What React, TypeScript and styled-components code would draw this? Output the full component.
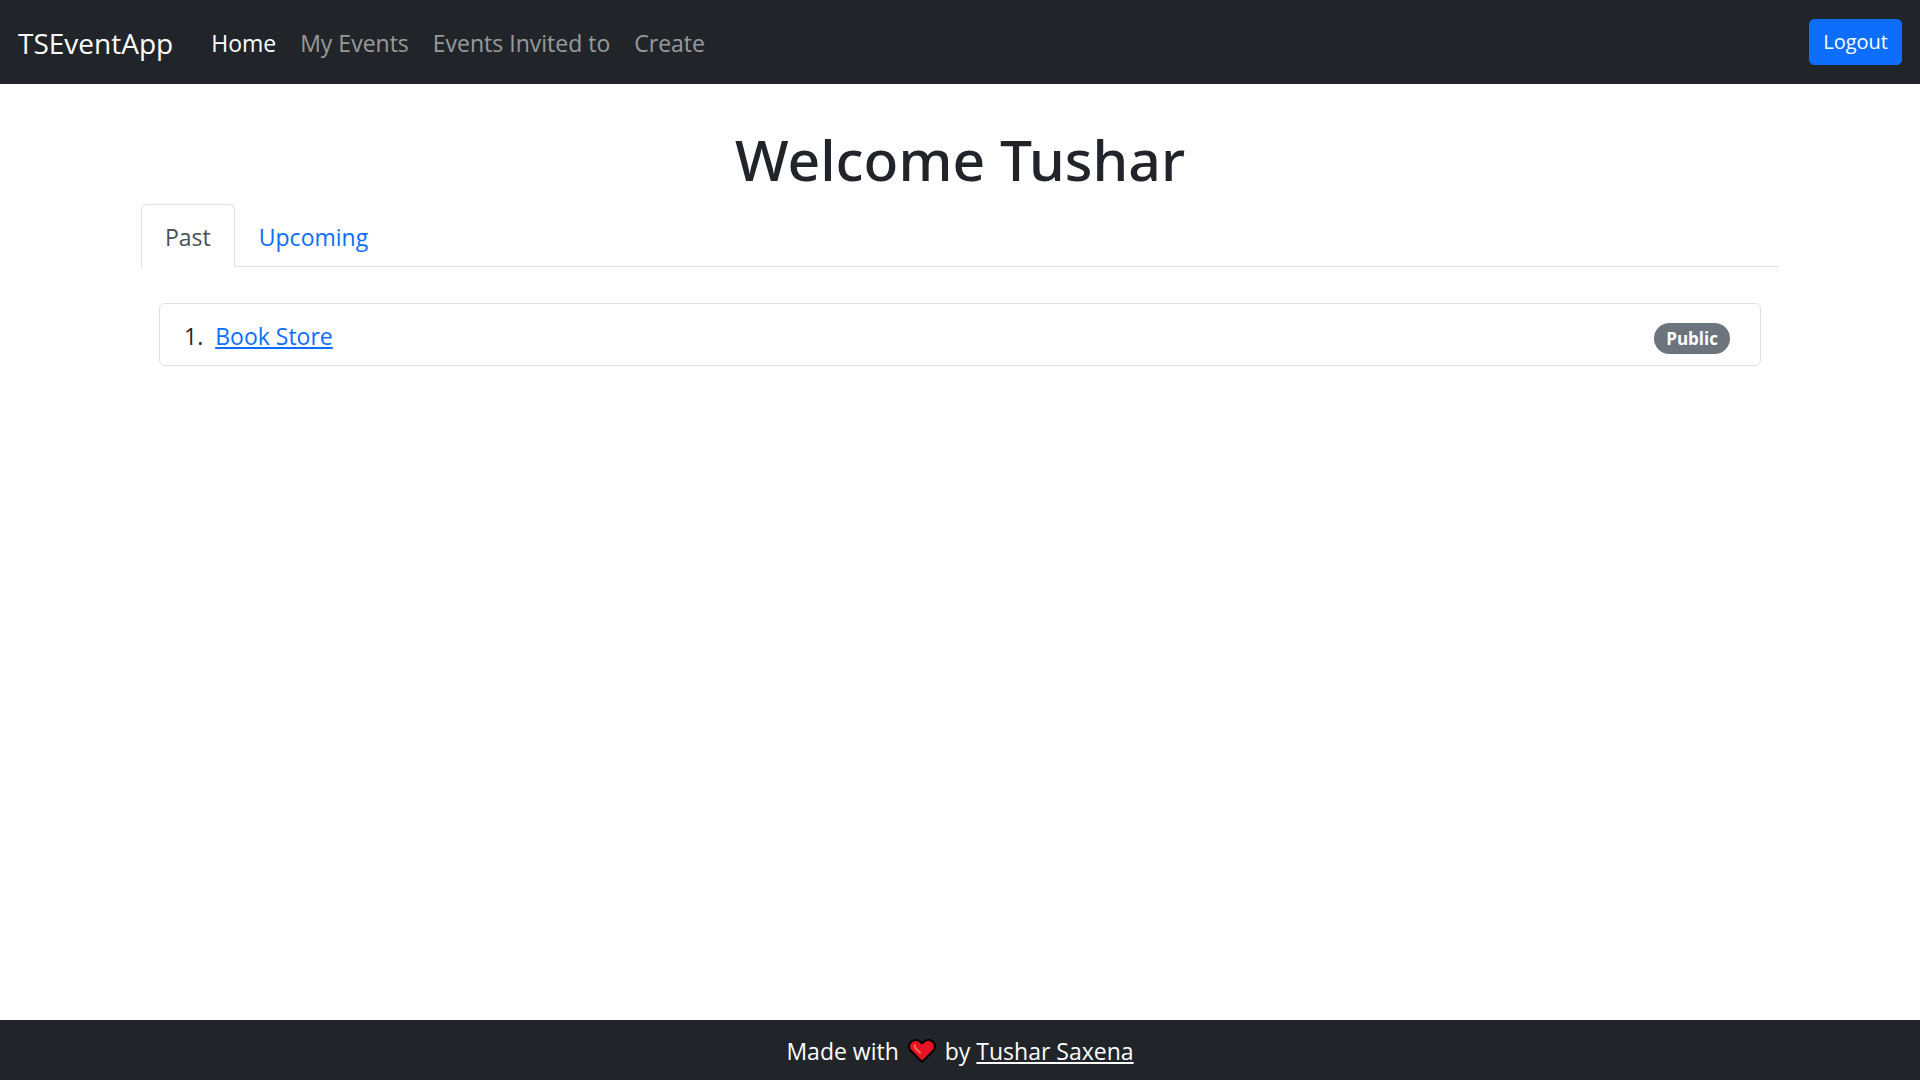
import React, { useState } from "react";
import styled, { createGlobalStyle } from "styled-components";

const GlobalStyle = createGlobalStyle`
  *, *::before, *::after { box-sizing: border-box; }
  body {
    margin: 0;
    background: #fff;
    color: #212529;
    font-family: "Open Sans", "Noto Sans", sans-serif;
    font-size: 23px;
    line-height: 36px;
  }
`;

const Page = styled.div`
  display: flex;
  flex-direction: column;
  min-height: 100vh;
`;

const Navbar = styled.header`
  display: flex;
  align-items: center;
  min-height: 84px;
  padding: 0 18px;
  background: #212529;
`;

const Brand = styled.a`
  margin-right: 26px;
  padding-top: 2px;
  color: #fff;
  font-size: 28px;
  text-decoration: none;
`;

const NavLinks = styled.nav`
  display: flex;
  flex: 1;
`;

const NavLink = styled.a<{ $active?: boolean }>`
  padding: 2px 12px 0;
  color: ${(p) => (p.$active ? "#fff" : "rgba(255, 255, 255, 0.55)")};
  text-decoration: none;
`;

const LogoutButton = styled.button`
  padding: 6px 13px;
  border: 1px solid #0d6efd;
  border-radius: 5px;
  background: #0d6efd;
  color: #fff;
  font-family: inherit;
  font-size: 20px;
  line-height: 32px;
  cursor: pointer;
`;

const Main = styled.main`
  flex: 1;
  width: 100%;
  max-width: 1710px;
  margin: 0 auto;
  padding: 39px 36px 36px;
`;

const Title = styled.h1`
  margin: 0 0 9px;
  font-family: "Noto Sans", "Open Sans", sans-serif;
  font-size: 57px;
  font-weight: 500;
  line-height: 72px;
  text-align: center;
`;

const Tabs = styled.div`
  display: flex;
  border-bottom: 1px solid #dee2e6;
`;

const Tab = styled.button<{ $active: boolean }>`
  margin: 0 0 -1px;
  padding: 14px 23px 11px;
  border: 1px solid transparent;
  border-color: ${(p) => (p.$active ? "#dee2e6 #dee2e6 #fff" : "transparent")};
  border-radius: 6px 6px 0 0;
  background: ${(p) => (p.$active ? "#fff" : "transparent")};
  color: ${(p) => (p.$active ? "#495057" : "#0d6efd")};
  font: inherit;
  cursor: pointer;
`;

const EventList = styled.ol`
  margin: 36px 18px 0;
  padding: 0;
  border: 1px solid #dfdfdf;
  border-radius: 6px;
  list-style: none;
`;

const EventItem = styled.li`
  display: flex;
  align-items: baseline;
  gap: 12px;
  padding: 14px 30px 11px 24px;
`;

const EventLink = styled.a`
  margin-right: auto;
  color: #0d6efd;
  text-decoration: underline;
`;

const Badge = styled.span`
  padding: 0 12px;
  border-radius: 16px;
  background: #6c757d;
  color: #fff;
  font-size: 17px;
  font-weight: 700;
  line-height: 31px;
`;

const Footer = styled.footer`
  padding: 13px 18px 11px;
  background: #212529;
  color: #fff;
  text-align: center;
`;

const FooterLink = styled.a`
  color: #fff;
`;

const Heart = styled.svg`
  width: 28px;
  height: 26px;
  margin: 0 3px;
  vertical-align: -4px;
`;

const links = ["Home", "My Events", "Events Invited to", "Create"];

const events: Record<string, { name: string; visibility: string }[]> = {
  Past: [{ name: "Book Store", visibility: "Public" }],
  Upcoming: [],
};

export default function App() {
  const [tab, setTab] = useState("Past");

  return (
    <Page>
      <GlobalStyle />
      <Navbar>
        <Brand href="#">TSEventApp</Brand>
        <NavLinks>
          {links.map((label) => (
            <NavLink key={label} href="#" $active={label === "Home"}>
              {label}
            </NavLink>
          ))}
        </NavLinks>
        <LogoutButton type="button">Logout</LogoutButton>
      </Navbar>
      <Main>
        <Title>Welcome Tushar</Title>
        <Tabs role="tablist">
          {Object.keys(events).map((name) => (
            <Tab
              key={name}
              type="button"
              role="tab"
              aria-selected={tab === name}
              $active={tab === name}
              onClick={() => setTab(name)}
            >
              {name}
            </Tab>
          ))}
        </Tabs>
        {events[tab].length > 0 && (
          <EventList>
            {events[tab].map((event, i) => (
              <EventItem key={event.name}>
                <span>{i + 1}.</span>
                <EventLink href="#">{event.name}</EventLink>
                <Badge>{event.visibility}</Badge>
              </EventItem>
            ))}
          </EventList>
        )}
      </Main>
      <Footer>
        Made with{" "}
        <Heart viewBox="0 0 28 26" aria-hidden="true">
          <path
            d="M14 24 L3 13 A6.5 6.5 0 0 1 2.8 4 A6.4 6.4 0 0 1 11.9 3.6 L14 5.2 L16.1 3.6 A6.4 6.4 0 0 1 25.2 4 A6.5 6.5 0 0 1 25 13 Z"
            fill="#e81224"
            stroke="#000"
            strokeWidth="2"
            strokeLinejoin="round"
          />
          <path
            d="M6.8 7.4 Q6.6 9.4 8.2 11 L12 14.8"
            fill="none"
            stroke="#f4694f"
            strokeWidth="2.2"
            strokeLinecap="round"
          />
        </Heart>{" "}
        by <FooterLink href="#">Tushar Saxena</FooterLink>
      </Footer>
    </Page>
  );
}
